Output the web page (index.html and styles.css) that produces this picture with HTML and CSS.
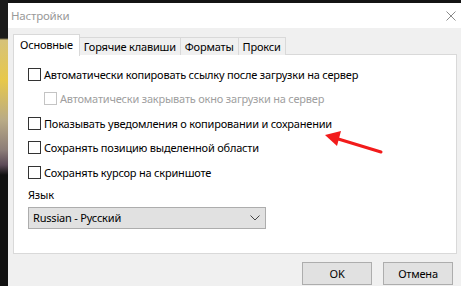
FILE: index.html
```html
<!DOCTYPE html>
<html lang="ru">
<head>
    <meta charset="UTF-8">
    <meta name="viewport" content="width=device-width, initial-scale=1.0">
    <title>Настройки</title>
    <link rel="stylesheet" href="styles.css">
</head>
<body>
    <div class="desktop">
        <div class="wallpaper"></div>
        <div class="dialog">
            <div class="titlebar">
                <span class="title">Настройки</span>
                <svg class="close" width="10" height="10" viewBox="0 0 10 10">
                    <path d="M0.5 0.5 L9.5 9.5 M9.5 0.5 L0.5 9.5" stroke="#8a8a8a" stroke-width="1" fill="none"/>
                </svg>
            </div>
            <div class="dialog-body">
                <div class="tabs">
                    <div class="tab active">Основные</div>
                    <div class="tab">Горячие клавиши</div>
                    <div class="tab">Форматы</div>
                    <div class="tab">Прокси</div>
                </div>
                <div class="panel">
                    <label class="row">
                        <span class="box"></span>
                        <span>Автоматически копировать ссылку после загрузки на сервер</span>
                    </label>
                    <label class="row sub disabled">
                        <span class="box"></span>
                        <span>Автоматически закрывать окно загрузки на сервер</span>
                    </label>
                    <label class="row">
                        <span class="box"></span>
                        <span>Показывать уведомления о копировании и сохранении</span>
                    </label>
                    <label class="row">
                        <span class="box"></span>
                        <span>Сохранять позицию выделенной области</span>
                    </label>
                    <label class="row">
                        <span class="box"></span>
                        <span>Сохранять курсор на скриншоте</span>
                    </label>
                    <div class="lang-label">Язык</div>
                    <div class="select">
                        <span>Russian - Русский</span>
                        <svg width="10" height="6" viewBox="0 0 10 6">
                            <path d="M0.5 0.5 L5 5 L9.5 0.5" stroke="#444" stroke-width="1" fill="none"/>
                        </svg>
                    </div>
                </div>
                <div class="buttons">
                    <button class="btn">OK</button>
                    <button class="btn">Отмена</button>
                </div>
            </div>
        </div>
    </div>
    <svg class="arrow" width="70" height="30" viewBox="0 0 70 30">
        <path d="M58 22 L12 8" stroke="#f21b1b" stroke-width="3" stroke-linecap="round"/>
        <path d="M2 5 L18 1 L14 16 Z" fill="#f21b1b"/>
    </svg>
</body>
</html>
```
FILE: styles.css
```css
body {
    margin: 0;
    background: #141414;
    font-family: "Noto Sans", "Open Sans", sans-serif;
    font-size: 11px;
    letter-spacing: -0.2px;
    color: #000;
    width: 461px;
    height: 286px;
    overflow: hidden;
    position: relative;
}
.desktop {
    display: flex;
    height: 286px;
    padding-top: 3px;
    box-sizing: border-box;
}
.wallpaper {
    width: 8px;
    margin-top: -3px;
    background: linear-gradient(#1b1b1b 0, #1b1b1b 38px, #d6c27a 40px, #e7c84a 80px, #b9ab86 120px, #8c7d78 150px, #5c4a57 165px, #111 175px, #111 100%);
}
.dialog {
    flex: 1;
    display: flex;
    flex-direction: column;
    background: #f0f0f0;
}
.titlebar {
    height: 25px;
    background: #fff;
    display: flex;
    align-items: center;
    justify-content: space-between;
    padding: 0 0 0 3px;
}
.title {
    color: #999;
    font-size: 11.5px;
}
.close {
    margin-right: 5px;
}
.dialog-body {
    padding: 7px 4px 0 5px;
}
.tabs {
    display: flex;
    align-items: flex-end;
    height: 20px;
    margin-bottom: -1px;
    position: relative;
    z-index: 1;
}
.tab {
    height: 17px;
    line-height: 17px;
    padding: 0 4px;
    border: 1px solid #d9d9d9;
    border-bottom: none;
    border-left: none;
    background: #f0f0f0;
}
.tab:first-child {
    border-left: 1px solid #d9d9d9;
}
.tab.active {
    height: 21px;
    line-height: 20px;
    background: #fff;
    padding: 0 6px;
    border-left: 1px solid #d9d9d9;
    margin-bottom: -1px;
}
.panel {
    height: 191px;
    background: #fff;
    border: 1px solid #d9d9d9;
    padding: 7px 14px 0 14px;
    display: flex;
    flex-direction: column;
    align-items: flex-start;
}
.row {
    display: flex;
    align-items: center;
    gap: 3px;
    height: 24.5px;
}
.box {
    width: 11px;
    height: 11px;
    border: 1px solid #333;
    background: #fff;
}
.row.sub {
    padding-left: 16px;
}
.row.disabled {
    color: #a0a0a0;
}
.row.disabled .box {
    border-color: #c4c4c4;
}
.lang-label {
    margin-top: 1px;
    height: 18px;
    line-height: 18px;
}
.select {
    margin-top: 3px;
    width: 227px;
    height: 20px;
    border: 1px solid #adadad;
    background: #e1e1e1;
    display: flex;
    align-items: center;
    justify-content: space-between;
    padding: 0 5px 0 4px;
}
.buttons {
    display: flex;
    justify-content: flex-end;
    gap: 11px;
    padding: 8px 4px 0 0;
}
.btn {
    width: 70px;
    height: 23px;
    border: 1px solid #adadad;
    background: #e1e1e1;
    font-family: "Noto Sans", "Open Sans", sans-serif;
    font-size: 11px;
    letter-spacing: -0.2px;
    color: #000;
    padding: 0;
}
.arrow {
    position: absolute;
    left: 323px;
    top: 130px;
}
```
